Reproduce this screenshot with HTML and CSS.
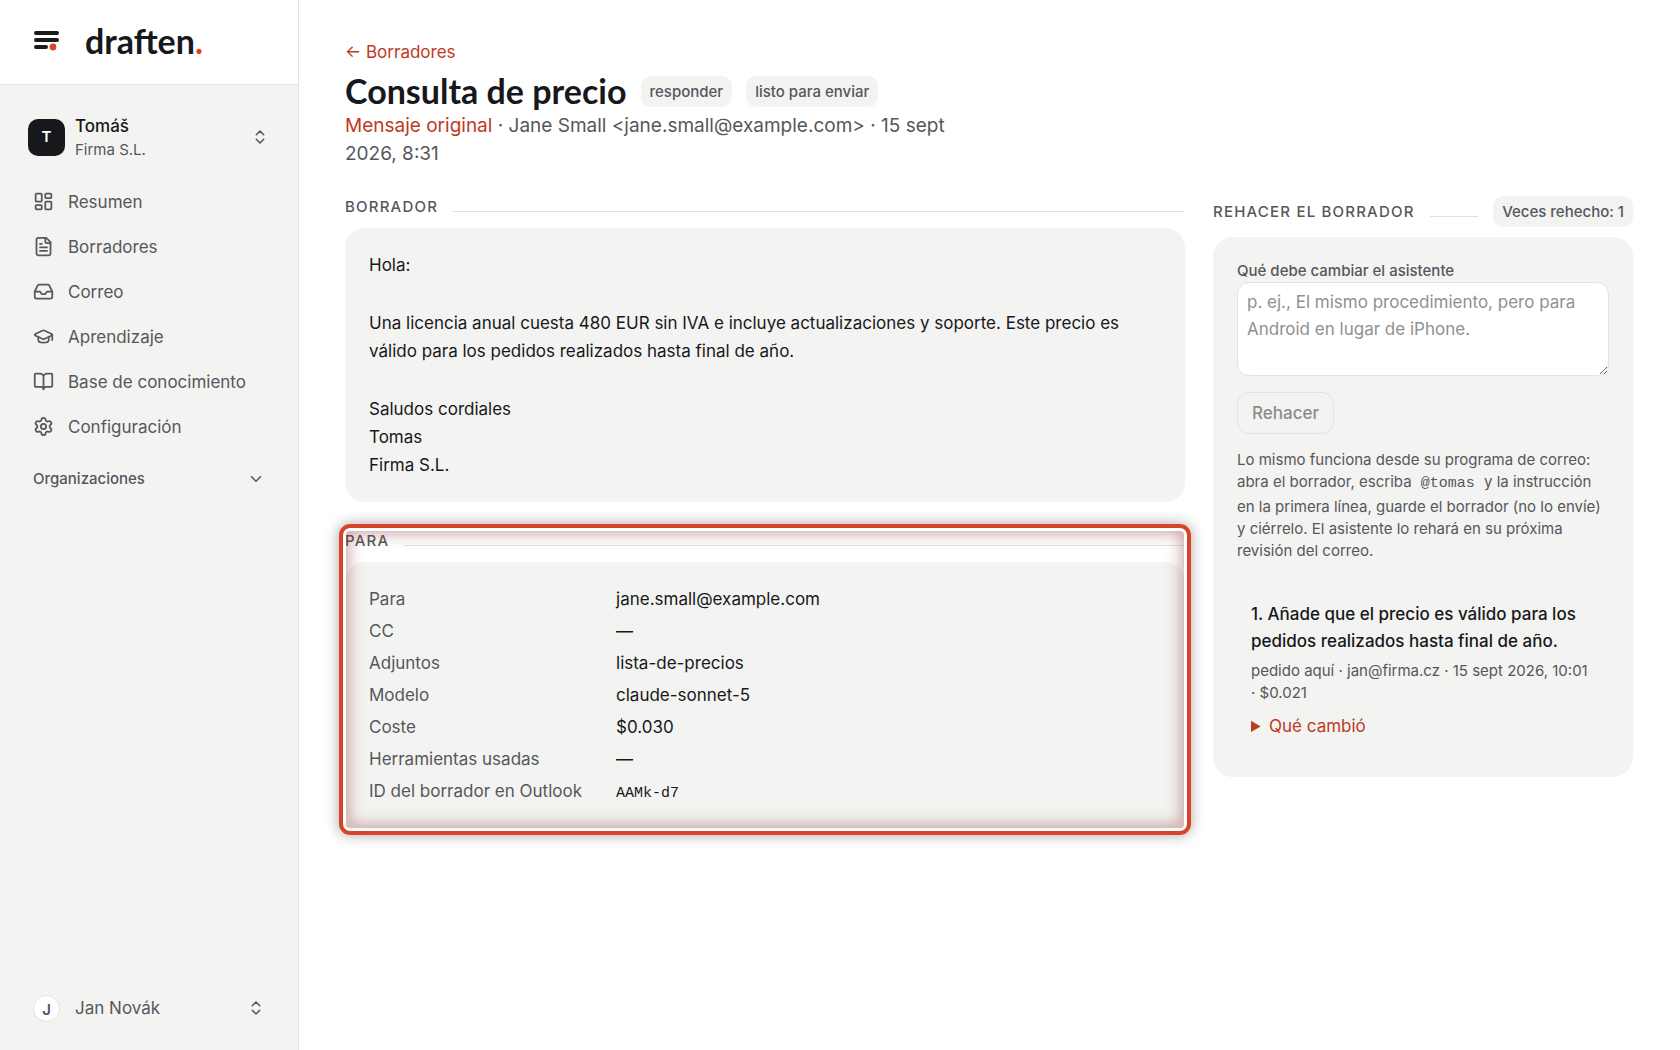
FILE: index.html
```html
<!DOCTYPE html>
<html lang="es">
<head>
<meta charset="utf-8">
<meta name="viewport" content="width=device-width, initial-scale=1">
<title>Consulta de precio · draften</title>
<link rel="stylesheet" href="styles.css">
</head>
<body>
<div class="app">
  <aside class="sidebar">
    <a class="brand" href="#">
      <svg class="brand-mark" viewBox="0 0 26 20" width="26" height="20" aria-hidden="true">
        <path d="M2 2h21M2 9h21M2 16h10" stroke="#1a1b1f" stroke-width="4" stroke-linecap="round"/>
        <circle cx="19" cy="16" r="3.4" fill="#dc4327"/>
      </svg>
      <span class="brand-name">draften<span class="brand-dot">.</span></span>
    </a>
    <button class="workspace" type="button">
      <span class="workspace-avatar">T</span>
      <span class="workspace-text"><span class="workspace-name">Tomáš</span><span class="workspace-org">Firma S.L.</span></span>
      <svg class="icon" viewBox="0 0 24 24" width="18" height="18" aria-hidden="true"><path d="m7 15 5 5 5-5M7 9l5-5 5 5"/></svg>
    </button>
    <nav class="nav">
      <a href="#"><svg class="icon" viewBox="0 0 24 24" width="21" height="21" aria-hidden="true"><rect x="3" y="3" width="7" height="9" rx="1"/><rect x="14" y="3" width="7" height="5" rx="1"/><rect x="14" y="12" width="7" height="9" rx="1"/><rect x="3" y="16" width="7" height="5" rx="1"/></svg>Resumen</a>
      <a href="#"><svg class="icon" viewBox="0 0 24 24" width="21" height="21" aria-hidden="true"><path d="M15 2H6a2 2 0 0 0-2 2v16a2 2 0 0 0 2 2h12a2 2 0 0 0 2-2V7Z"/><path d="M14 2v4a2 2 0 0 0 2 2h4M10 9H8M16 13H8M16 17H8"/></svg>Borradores</a>
      <a href="#"><svg class="icon" viewBox="0 0 24 24" width="21" height="21" aria-hidden="true"><path d="M22 12h-6l-2 3h-4l-2-3H2"/><path d="M5.45 5.11 2 12v6a2 2 0 0 0 2 2h16a2 2 0 0 0 2-2v-6l-3.45-6.89A2 2 0 0 0 16.76 4H7.24a2 2 0 0 0-1.79 1.11z"/></svg>Correo</a>
      <a href="#"><svg class="icon" viewBox="0 0 24 24" width="21" height="21" aria-hidden="true"><path d="M21.42 10.922a1 1 0 0 0-.019-1.838L12.83 5.18a2 2 0 0 0-1.66 0L2.6 9.08a1 1 0 0 0 0 1.832l8.57 3.908a2 2 0 0 0 1.66 0z"/><path d="M22 10v6M6 12.5V16a6 3 0 0 0 12 0v-3.5"/></svg>Aprendizaje</a>
      <a href="#"><svg class="icon" viewBox="0 0 24 24" width="21" height="21" aria-hidden="true"><path d="M12 7v14M3 18a1 1 0 0 1-1-1V4a1 1 0 0 1 1-1h5a4 4 0 0 1 4 4 4 4 0 0 1 4-4h5a1 1 0 0 1 1 1v13a1 1 0 0 1-1 1h-6a3 3 0 0 0-3 3 3 3 0 0 0-3-3z"/></svg>Base de conocimiento</a>
      <a href="#"><svg class="icon" viewBox="0 0 24 24" width="21" height="21" aria-hidden="true"><path d="M9.671 4.136a2.34 2.34 0 0 1 4.659 0 2.34 2.34 0 0 0 3.319 1.915 2.34 2.34 0 0 1 2.33 4.033 2.34 2.34 0 0 0 0 3.831 2.34 2.34 0 0 1-2.33 4.033 2.34 2.34 0 0 0-3.319 1.915 2.34 2.34 0 0 1-4.659 0 2.34 2.34 0 0 0-3.32-1.915 2.34 2.34 0 0 1-2.33-4.033 2.34 2.34 0 0 0 0-3.831A2.34 2.34 0 0 1 6.35 6.051a2.34 2.34 0 0 0 3.319-1.915"/><circle cx="12" cy="12" r="3"/></svg>Configuración</a>
    </nav>
    <button class="nav-group" type="button">Organizaciones
      <svg class="icon" viewBox="0 0 24 24" width="18" height="18" aria-hidden="true"><path d="m6 9 6 6 6-6"/></svg>
    </button>
    <button class="account" type="button">
      <span class="account-avatar">J</span>
      <span class="account-name">Jan Novák</span>
      <svg class="icon" viewBox="0 0 24 24" width="18" height="18" aria-hidden="true"><path d="m7 15 5 5 5-5M7 9l5-5 5 5"/></svg>
    </button>
  </aside>

  <main class="main">
    <header class="page-head">
      <a class="back" href="#">← Borradores</a>
      <div class="title-row">
        <h1>Consulta de precio</h1>
        <span class="badge">responder</span>
        <span class="badge">listo para enviar</span>
      </div>
      <p class="subtitle"><a href="#">Mensaje original</a> · Jane Small &lt;jane.small@example.com&gt; · 15 sept 2026, 8:31</p>
    </header>

    <div class="columns">
      <div class="column">
        <section>
          <div class="section-head"><h2>Borrador</h2><span class="rule"></span></div>
          <div class="card letter">
            <p>Hola:</p>
            <p>Una licencia anual cuesta 480 EUR sin IVA e incluye actualizaciones y soporte. Este precio es válido para los pedidos realizados hasta final de año.</p>
            <p>Saludos cordiales<br>Tomas<br>Firma S.L.</p>
          </div>
        </section>
        <section class="highlighted">
          <div class="section-head"><h2>Para</h2><span class="rule"></span></div>
          <dl class="card details-list">
            <dt>Para</dt><dd>jane.small@example.com</dd>
            <dt>CC</dt><dd>—</dd>
            <dt>Adjuntos</dt><dd>lista-de-precios</dd>
            <dt>Modelo</dt><dd>claude-sonnet-5</dd>
            <dt>Coste</dt><dd>$0.030</dd>
            <dt>Herramientas usadas</dt><dd>—</dd>
            <dt>ID del borrador en Outlook</dt><dd><code>AAMk-d7</code></dd>
          </dl>
        </section>
      </div>

      <section>
        <div class="section-head"><h2>Rehacer el borrador</h2><span class="rule"></span><span class="badge">Veces rehecho: 1</span></div>
        <div class="card">
          <form class="redo">
            <label for="instruction">Qué debe cambiar el asistente</label>
            <textarea id="instruction" placeholder="p. ej., El mismo procedimiento, pero para Android en lugar de iPhone."></textarea>
            <button type="submit" disabled>Rehacer</button>
          </form>
          <p class="hint">Lo mismo funciona desde su programa de correo: abra el borrador, escriba <code>@tomas</code> y la instrucción en la primera línea, guarde el borrador (no lo envíe) y ciérrelo. El asistente lo rehará en su próxima revisión del correo.</p>
          <article class="revision">
            <h3>1. Añade que el precio es válido para los pedidos realizados hasta final de año.</h3>
            <p>pedido aquí · jan@firma.cz · 15 sept 2026, 10:01 · $0.021</p>
            <details><summary>Qué cambió</summary></details>
          </article>
        </div>
      </section>
    </div>
  </main>
</div>
</body>
</html>
```
FILE: styles.css
```css
:root {
  --ink: #17181b;
  --muted: #55575b;
  --accent: #bf3a22;
  --panel: #f3f3f1;
  --line: #e2e2e0;
}
* { box-sizing: border-box; }
body {
  margin: 0;
  background: #fff;
  color: var(--ink);
  font: 17px/28px Inter, "Liberation Sans", sans-serif;
}
h1, h2, h3, p, dl, dd { margin: 0; }
a { color: var(--accent); text-decoration: none; }
button { font: inherit; color: inherit; background: none; border: 0; padding: 0; text-align: left; }
code { font: 15px/24px "Liberation Mono", monospace; }
.icon { flex: none; fill: none; stroke: currentColor; stroke-width: 2; stroke-linecap: round; stroke-linejoin: round; }

.app { display: grid; grid-template-columns: 299px minmax(0, 1fr); min-height: 100vh; }

.sidebar {
  display: flex;
  flex-direction: column;
  background: var(--panel);
  border-right: 1px solid var(--line);
  color: var(--muted);
}
.brand {
  display: flex;
  align-items: center;
  gap: 25px;
  height: 85px;
  padding: 0 34px 2px;
  background: #fff;
  border-bottom: 1px solid var(--line);
  color: var(--ink);
}
.brand-mark { fill: none; }
.brand-name { font: 700 34px/40px Lato, sans-serif; }
.brand-dot { color: #dc4327; }

.workspace { display: flex; align-items: center; gap: 10px; margin: 28px 29px 18px 28px; }
.workspace .icon, .account .icon { margin-left: auto; }
.workspace-avatar {
  display: grid;
  place-items: center;
  width: 37px;
  height: 37px;
  border-radius: 10px;
  background: var(--ink);
  color: #fff;
  font-size: 15px;
  font-weight: 600;
}
.workspace-text { display: grid; padding-top: 2px; }
.workspace-name { color: var(--ink); font-weight: 500; line-height: 23px; }
.workspace-org { font-size: 15px; line-height: 23px; }

.nav { display: grid; }
.nav a { display: flex; align-items: center; gap: 14px; height: 45px; padding-left: 33px; color: inherit; }
.nav-group {
  display: flex;
  align-items: center;
  justify-content: space-between;
  margin: 16px 33px 0;
  font-size: 15px;
  font-weight: 500;
}
.account { display: flex; align-items: center; gap: 15px; margin: auto 33px 28px; }
.account-avatar {
  display: grid;
  place-items: center;
  width: 27px;
  height: 27px;
  border: 1px solid var(--line);
  border-radius: 50%;
  background: #fff;
  font-size: 15px;
  font-weight: 600;
}

.main { padding: 38px 47px 40px 46px; }
.page-head { max-width: 620px; }
.back { display: block; }
.title-row { display: flex; align-items: center; gap: 14px; height: 42px; margin-top: 4px; white-space: nowrap; }
h1 { font: 700 34px/42px Lato, sans-serif; }
.badge {
  padding: 4px 9px;
  border-radius: 10px;
  background: var(--panel);
  color: var(--muted);
  font-size: 15px;
  font-weight: 500;
  line-height: 23px;
  white-space: nowrap;
}
.subtitle { color: var(--muted); font-size: 19px; }

.columns { display: grid; grid-template-columns: minmax(0, 2fr) minmax(0, 1fr); align-items: start; gap: 28px; margin-top: 28px; }
.column { display: grid; gap: 28px; }
.section-head { display: flex; align-items: baseline; gap: 15px; margin-bottom: 10px; }
h2 {
  color: var(--muted);
  font-size: 15px;
  font-weight: 500;
  line-height: 22px;
  letter-spacing: 0.08em;
  text-transform: uppercase;
}
.rule { flex: 1; border-bottom: 1px solid var(--line); }
.card { padding: 23px 24px; border-radius: 20px; background: var(--panel); }
.letter { display: grid; gap: 30px; }
.details-list { display: grid; grid-template-columns: max-content 1fr; gap: 4px 34px; }
.details-list dt { color: var(--muted); }

.highlighted { position: relative; }
.highlighted::after {
  content: "";
  position: absolute;
  inset: -6px;
  border: 4px solid #d6452a;
  border-radius: 11px;
  box-shadow: inset 0 0 0 3px #fff, inset 0 0 16px 5px rgba(130, 45, 40, 0.45), 0 0 14px rgba(50, 35, 25, 0.4);
  pointer-events: none;
}

.redo { display: grid; justify-items: start; color: var(--muted); }
.redo label { font-size: 15px; font-weight: 500; line-height: 22px; }
.redo textarea {
  width: 100%;
  height: 94px;
  padding: 6px 9px;
  border: 1px solid var(--line);
  border-radius: 12px;
  background: #fff;
  color: var(--ink);
  font: inherit;
  line-height: 27px;
  resize: vertical;
}
.redo textarea::placeholder { color: #8f9092; }
.redo button {
  margin-top: 16px;
  padding: 6px 14px;
  border: 1px solid var(--line);
  border-radius: 12px;
  color: #8b8c8d;
  font-weight: 500;
}
.hint { margin-top: 15px; color: var(--muted); font-size: 15px; line-height: 22px; }
.hint code { margin: 0 5px; }
.revision { margin-top: 25px; padding: 14px; }
.revision h3 { font-size: 17px; font-weight: 500; line-height: 27px; }
.revision p { margin: 5px 0 8px; color: var(--muted); font-size: 15px; line-height: 22px; }
.revision summary { color: var(--accent); }
```
